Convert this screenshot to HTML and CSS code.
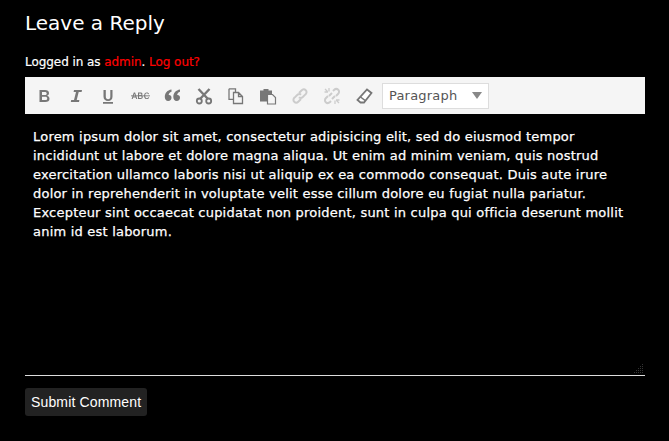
FILE: index.html
```html
<!DOCTYPE html>
<html lang="en">
<head>
<meta charset="utf-8">
<title>Leave a Reply</title>
<link rel="stylesheet" href="styles.css">
</head>
<body>
<div class="respond">
  <h3 class="title">Leave a Reply</h3>
  <p class="logged">Logged in as <a href="#">admin</a>. <a href="#">Log out?</a></p>
  <div class="editor">
    <div class="toolbar">
      <button class="tool" aria-label="Bold"><svg viewBox="0 0 20 20"><path class="f" d="M5.500 4h5.500c2.500 0 4 1.200 4 3.100 0 1.300-.7 2.300-1.900 2.700 1.500.4 2.400 1.500 2.400 3 0 2.100-1.600 3.200-4.200 3.200H5.500zM8 6v3h2.800c1.200 0 1.900-.5 1.900-1.500S12 6 10.800 6zM8 10.800V14h3.200c1.300 0 2-.6 2-1.600s-.7-1.600-2-1.600z" fill-rule="evenodd"/></svg></button>
      <button class="tool" aria-label="Italic"><svg viewBox="0 0 20 20"><path class="f" d="M8 4h8l-.4 2h-2.900l-2 8h2.700l-.4 2H4.800l.4-2h2.800l2-8H7.600z"/></svg></button>
      <button class="tool" aria-label="Underline"><svg viewBox="0 0 20 20"><path class="f" d="M5.500 4h2.300v6.500c0 1.800.8 2.700 2.300 2.700s2.200-.9 2.200-2.700V4h2.200v6.600c0 3-1.600 4.400-4.400 4.400s-4.600-1.400-4.600-4.400zM5 16h10v1.800H5z"/></svg></button>
      <button class="tool" aria-label="Strikethrough"><svg viewBox="0 0 20 20"><path class="f" d="M3.800 6.500h1.300l2.200 6.500H6.200l-.5-1.600H3.200L2.700 13H1.600zM4.400 7.800l-.9 2.700h1.900zM8 6.500h2.400c1.400 0 2.100.6 2.100 1.600 0 .7-.3 1.100-.9 1.400.8.200 1.200.8 1.200 1.600 0 1.200-.8 1.900-2.300 1.900H8zM9.100 7.400v1.800h1.100c.8 0 1.200-.3 1.200-.9s-.4-.9-1.200-.9zM9.100 10.100v2h1.300c.9 0 1.300-.4 1.300-1s-.4-1-1.300-1zM19 7.900l-.9.300c-.2-.6-.7-.9-1.300-.9-1 0-1.600.8-1.600 2.400s.6 2.500 1.600 2.500c.7 0 1.100-.4 1.400-1l1 .3c-.4 1-1.200 1.600-2.400 1.600-1.700 0-2.700-1.300-2.700-3.400s1-3.300 2.700-3.300c1.200 0 1.900.5 2.200 1.500z" fill-rule="evenodd"/><path class="f" d="M1 9.400h19v.9H1z"/></svg></button>
      <button class="tool" aria-label="Blockquote"><svg viewBox="0 0 20 20"><path class="f" d="M9.500 3.500v2.300C7.700 6.500 6.800 7.600 6.700 9c1.700-.2 2.800.9 2.800 2.700 0 1.900-1.200 3.300-3.300 3.300-2.200 0-3.400-1.700-3.400-4 0-3.900 2.500-6.900 6.700-7.500zM18 3.500v2.300c-1.800.7-2.700 1.800-2.800 3.200 1.700-.2 2.800.9 2.800 2.700 0 1.900-1.200 3.300-3.300 3.300-2.200 0-3.400-1.700-3.400-4 0-3.900 2.500-6.900 6.700-7.500z"/></svg></button>
      <button class="tool" aria-label="Cut"><svg viewBox="0 0 20 20"><path class="s" d="M4.500 3l9.500 10M15.500 3L6 13" stroke-width="2.400"/><circle class="s" cx="5.300" cy="15" r="2.500" stroke-width="1.800"/><circle class="s" cx="14.700" cy="15" r="2.500" stroke-width="1.800"/></svg></button>
      <button class="tool" aria-label="Copy"><svg viewBox="0 0 20 20"><path class="s" d="M3 2.800h6.500v3.500M3 2.800v10.500h4.500M7.500 6.500h5l4 4v7h-9zM12.500 6.500v4h4" stroke-width="1.300"/></svg></button>
      <button class="tool" aria-label="Paste"><svg viewBox="0 0 20 20"><path class="f" d="M2 4.500h3.500V3h5v1.500H14V8H9v7.500H2z"/><path class="page" d="M9.500 8.500h5l3 3v6.500h-8z"/><path class="s" d="M9.500 8.500h5l3 3v6.500h-8z" stroke-width="1.200"/></svg></button>
      <button class="tool off" aria-label="Link"><svg viewBox="0 0 20 20"><path class="s" d="M9 7l2.500-2.500c1.500-1.500 3-1.500 4.200-.3s1.200 2.800-.3 4.200L12.800 11c-1.300 1.200-2.800 1.200-3.800.2M11 13l-2.500 2.500c-1.500 1.500-3 1.500-4.200.3s-1.200-2.800.3-4.200L7.200 9c1.300-1.200 2.800-1.200 3.800-.2" stroke-width="2"/></svg></button>
      <button class="tool off" aria-label="Unlink"><svg viewBox="0 0 20 20"><path class="s" d="M11 5l1-1c1.500-1.400 3-1.400 4.200-.2s1.200 2.800-.2 4.200l-2 2M9 15l-1 1c-1.500 1.400-3 1.400-4.200.2S2.600 13.400 4 12l2-2M13 10l-3 3M10 7L7 10" stroke-width="2"/><path class="s" d="M7 2v3.500M2.500 6H6M13 18v-3.500M17.500 14H14M3 3l2.500 2.500M17 17l-2.500-2.500" stroke-width="1.300"/></svg></button>
      <button class="tool eraser" aria-label="Clear formatting"><svg viewBox="0 0 20 20"><path class="f" d="M13 3.500l4.500 3.500-7.500 9.500H6.500L3.500 14z"/><path class="s" d="M13 3.500l4.500 3.500-7.500 9.500H6.500L3.500 14z" stroke-width="1.800"/><path class="s" d="M6.500 11l4.800 3.600" stroke-width="1.400"/></svg></button>
      <div class="select"><span>Paragraph</span><i class="arrow"></i></div>
    </div>
    <div class="content">
      <p>Lorem ipsum dolor sit amet, consectetur adipisicing elit, sed do eiusmod tempor incididunt ut labore et dolore magna aliqua. Ut enim ad minim veniam, quis nostrud exercitation ullamco laboris nisi ut aliquip ex ea commodo consequat. Duis aute irure dolor in reprehenderit in voluptate velit esse cillum dolore eu fugiat nulla pariatur. Excepteur sint occaecat cupidatat non proident, sunt in culpa qui officia deserunt mollit anim id est laborum.</p>
      <svg class="grip" viewBox="0 0 10 10"><path d="M9 1h1v1H9zM7 3h1v1H7zM9 3h1v1H9zM5 5h1v1H5zM7 5h1v1H7zM9 5h1v1H9zM3 7h1v1H3zM5 7h1v1H5zM7 7h1v1H7zM9 7h1v1H9zM1 9h1v1H1zM3 9h1v1H3zM5 9h1v1H5zM7 9h1v1H7zM9 9h1v1H9z"/></svg>
    </div>
  </div>
  <button class="submit">Submit Comment</button>
</div>
</body>
</html>
```
FILE: styles.css
```css
html, body { margin: 0; padding: 0; background: #000; }
body { height: 441px; overflow: hidden; color: #fff; font-family: "DejaVu Sans", sans-serif; }
.respond { width: 620px; margin-left: 25px; padding-top: 11px; }
.title { margin: 0; font-family: "DejaVu Sans", sans-serif; font-size: 20px; font-weight: 400; line-height: 24px; }
.logged { margin: 19px 0 0; font-family: "DejaVu Sans", sans-serif; font-size: 12px; line-height: 16px; letter-spacing: -0.06px; -webkit-text-stroke: 0.2px currentColor; }
.logged a { color: #f00; text-decoration: none; }
.editor { margin-top: 7px; border-bottom: 1px solid #ddd; }
.toolbar { display: flex; align-items: center; height: 37px; box-sizing: border-box; padding: 0 0 0 9px; background: #f5f5f5; }
.tool { width: 20px; height: 20px; margin: 0 12px 0 0; padding: 0; border: 0; background: none; }
.tool svg { display: block; width: 20px; height: 20px; }
.f { fill: #777; }
.s { fill: none; stroke: #777; }
.page { fill: #f5f5f5; }
.off .s { stroke: #ccc; }
.eraser .s { stroke: #777; }
.eraser .f { fill: #fff; }
.select { display: flex; align-items: center; justify-content: space-between; width: 107px; height: 26px; box-sizing: border-box; margin-left: -4px; padding: 0 6px 0 6px; border: 1px solid #ddd; background: #fff; color: #555; font-size: 13px; letter-spacing: 0.2px; }
.arrow { border: 5px solid transparent; border-top: 7px solid #888; border-bottom: 0; }
.content { position: relative; height: 261px; box-sizing: border-box; padding: 13px 8px; background: #000; }
.content p { margin: 0; font-size: 13px; letter-spacing: 0.21px; line-height: 19px; color: #fff; -webkit-text-stroke: 0.25px #fff; }
.grip { position: absolute; right: 2px; bottom: 2px; width: 10px; height: 10px; fill: #333; }
.submit { display: block; margin-top: 12px; height: 28px; padding: 0 6px; border: 0; border-radius: 3px; background: #222; color: #fff; font-family: "Liberation Sans", sans-serif; font-size: 14px; letter-spacing: 0.15px; }
```
